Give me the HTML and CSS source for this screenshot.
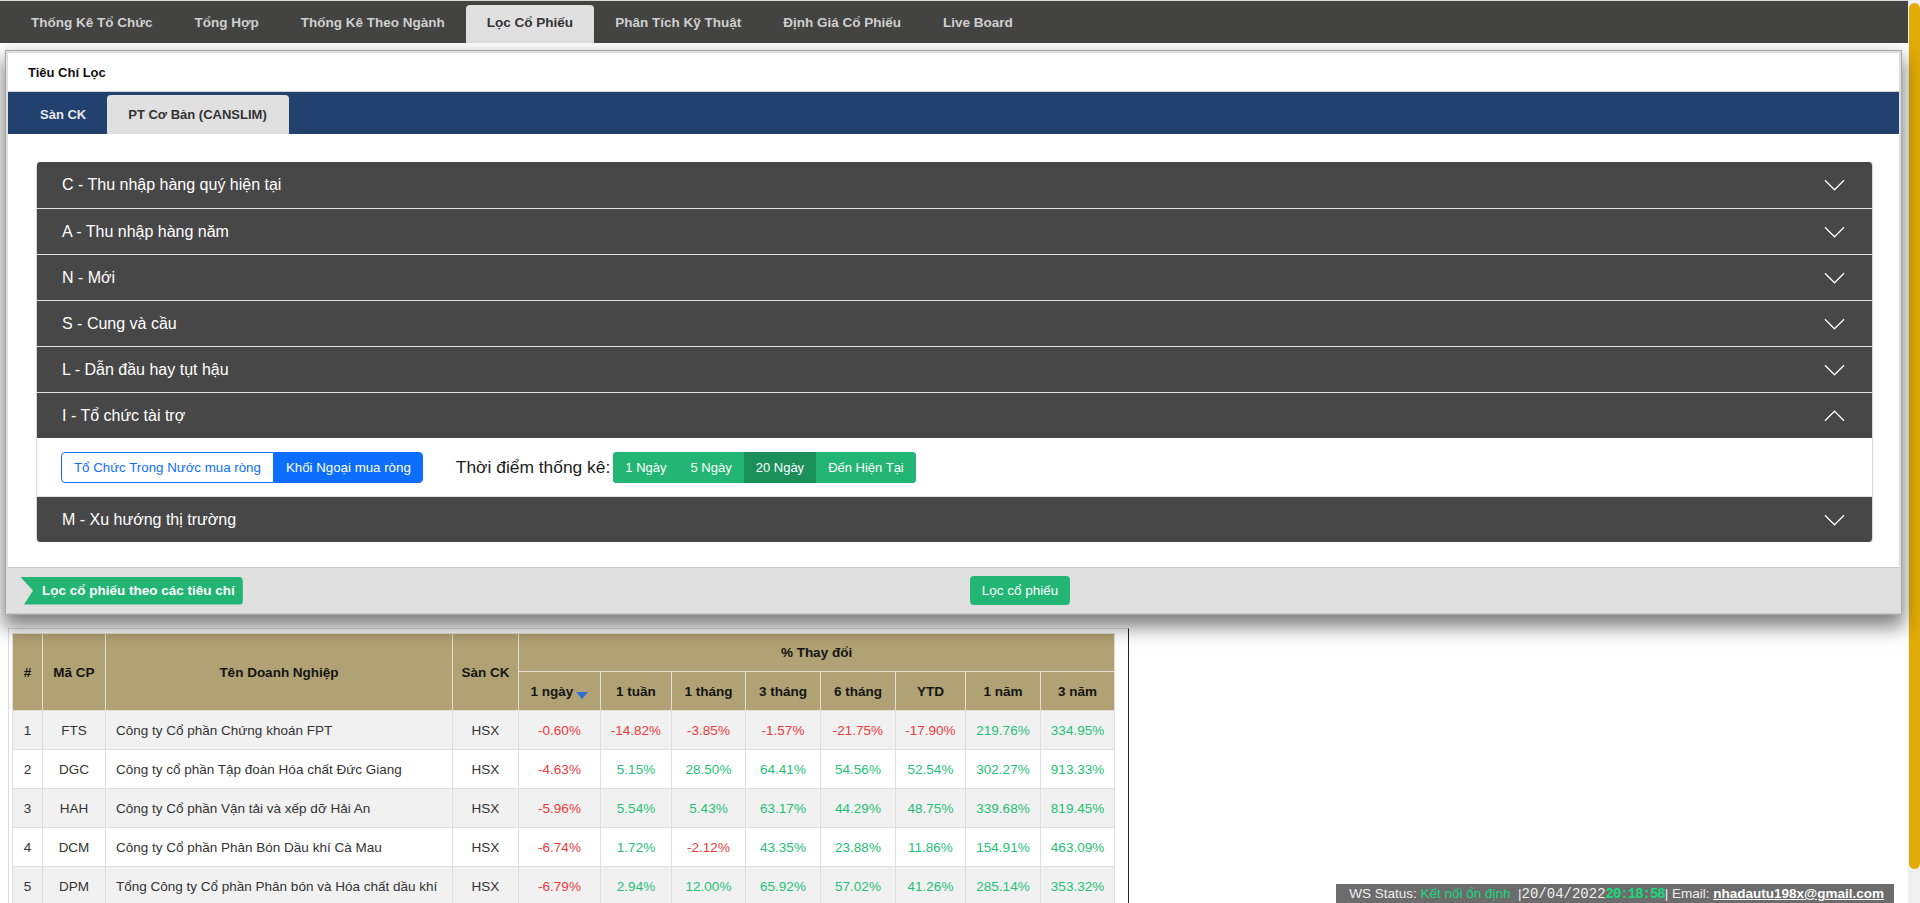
FILE: index.html
```html
<!DOCTYPE html>
<html lang="vi">
<head>
<meta charset="utf-8">
<title>Lọc Cổ Phiếu</title>
<link rel="stylesheet" href="styles.css">
</head>
<body>
<nav class="topnav">
  <a class="tab">Thống Kê Tổ Chức</a>
  <a class="tab">Tổng Hợp</a>
  <a class="tab">Thống Kê Theo Ngành</a>
  <a class="tab active">Lọc Cổ Phiếu</a>
  <a class="tab">Phân Tích Kỹ Thuật</a>
  <a class="tab">Định Giá Cổ Phiếu</a>
  <a class="tab">Live Board</a>
</nav>

<section class="panel">
  <div class="panel-inner">
    <div class="panel-title">Tiêu Chí Lọc</div>
    <div class="subtabs">
      <a class="subtab">Sàn CK</a>
      <a class="subtab active">PT Cơ Bản (CANSLIM)</a>
    </div>
    <div class="content">
      <div class="accordion">
        <div class="acc-head"><span>C - Thu nhập hàng quý hiện tại</span><svg class="chev" viewBox="0 0 22 12"><polyline points="1,1 11,11 21,1"/></svg></div>
        <div class="acc-head"><span>A - Thu nhập hàng năm</span><svg class="chev" viewBox="0 0 22 12"><polyline points="1,1 11,11 21,1"/></svg></div>
        <div class="acc-head"><span>N - Mới</span><svg class="chev" viewBox="0 0 22 12"><polyline points="1,1 11,11 21,1"/></svg></div>
        <div class="acc-head"><span>S - Cung và cầu</span><svg class="chev" viewBox="0 0 22 12"><polyline points="1,1 11,11 21,1"/></svg></div>
        <div class="acc-head"><span>L - Dẫn đầu hay tụt hậu</span><svg class="chev" viewBox="0 0 22 12"><polyline points="1,1 11,11 21,1"/></svg></div>
        <div class="acc-head"><span>I - Tổ chức tài trợ</span><svg class="chev" viewBox="0 0 22 12"><polyline points="1,11 11,1 21,11"/></svg></div>
        <div class="acc-body">
          <div class="btn-group">
            <button class="btn btn-outline">Tổ Chức Trong Nước mua ròng</button>
            <button class="btn btn-blue">Khối Ngoại mua ròng</button>
          </div>
          <span class="label">Thời điểm thống kê:</span>
          <div class="btn-group green-group">
            <button class="btn btn-green">1 Ngày</button>
            <button class="btn btn-green">5 Ngày</button>
            <button class="btn btn-green dark">20 Ngày</button>
            <button class="btn btn-green">Đến Hiện Tại</button>
          </div>
        </div>
        <div class="acc-head last"><span>M - Xu hướng thị trường</span><svg class="chev" viewBox="0 0 22 12"><polyline points="1,1 11,11 21,1"/></svg></div>
      </div>
    </div>
    <div class="footer">
      <div class="ribbon">Lọc cổ phiếu theo các tiêu chí</div>
      <button class="btn-filter">Lọc cổ phiếu</button>
    </div>
  </div>
</section>

<section class="table-wrap">
  <table class="grid">
    <colgroup>
      <col style="width:30px"><col style="width:63px"><col style="width:347px"><col style="width:66px">
      <col style="width:82px"><col style="width:71px"><col style="width:74px"><col style="width:75px">
      <col style="width:75px"><col style="width:70px"><col style="width:75px"><col style="width:74px">
    </colgroup>
    <thead>
      <tr class="h1">
        <th rowspan="2">#</th>
        <th rowspan="2">Mã CP</th>
        <th rowspan="2">Tên Doanh Nghiệp</th>
        <th rowspan="2">Sàn CK</th>
        <th colspan="8">% Thay đổi</th>
      </tr>
      <tr class="h2">
        <th>1 ngày<span class="sort"></span></th>
        <th>1 tuần</th>
        <th>1 tháng</th>
        <th>3 tháng</th>
        <th>6 tháng</th>
        <th>YTD</th>
        <th>1 năm</th>
        <th>3 năm</th>
      </tr>
    </thead>
    <tbody>
      <tr>
        <td>1</td><td>FTS</td><td class="name">Công ty Cổ phần Chứng khoán FPT</td><td>HSX</td>
        <td class="dn">-0.60%</td><td class="dn">-14.82%</td><td class="dn">-3.85%</td><td class="dn">-1.57%</td><td class="dn">-21.75%</td><td class="dn">-17.90%</td><td class="up">219.76%</td><td class="up">334.95%</td>
      </tr>
      <tr>
        <td>2</td><td>DGC</td><td class="name">Công ty cổ phần Tập đoàn Hóa chất Đức Giang</td><td>HSX</td>
        <td class="dn">-4.63%</td><td class="up">5.15%</td><td class="up">28.50%</td><td class="up">64.41%</td><td class="up">54.56%</td><td class="up">52.54%</td><td class="up">302.27%</td><td class="up">913.33%</td>
      </tr>
      <tr>
        <td>3</td><td>HAH</td><td class="name">Công ty Cổ phần Vận tải và xếp dỡ Hải An</td><td>HSX</td>
        <td class="dn">-5.96%</td><td class="up">5.54%</td><td class="up">5.43%</td><td class="up">63.17%</td><td class="up">44.29%</td><td class="up">48.75%</td><td class="up">339.68%</td><td class="up">819.45%</td>
      </tr>
      <tr>
        <td>4</td><td>DCM</td><td class="name">Công ty Cổ phần Phân Bón Dầu khí Cà Mau</td><td>HSX</td>
        <td class="dn">-6.74%</td><td class="up">1.72%</td><td class="dn">-2.12%</td><td class="up">43.35%</td><td class="up">23.88%</td><td class="up">11.86%</td><td class="up">154.91%</td><td class="up">463.09%</td>
      </tr>
      <tr>
        <td>5</td><td>DPM</td><td class="name">Tổng Công ty Cổ phần Phân bón và Hóa chất dầu khí</td><td>HSX</td>
        <td class="dn">-6.79%</td><td class="up">2.94%</td><td class="up">12.00%</td><td class="up">65.92%</td><td class="up">57.02%</td><td class="up">41.26%</td><td class="up">285.14%</td><td class="up">353.32%</td>
      </tr>
    </tbody>
  </table>
</section>

<div class="status">WS Status: <span class="ok">Kết nối ổn định</span>  |<span class="digit">20/04/2022</span> <span class="digit time">20:18:58</span>| Email: <a class="mail">nhadautu198x@gmail.com</a></div>

<div class="scrollbar" aria-hidden="true"><div class="thumb"></div></div>
</body>
</html>
```

FILE: styles.css
```css
* {
  box-sizing: border-box;
}
body {
  margin: 0;
  padding: 0 12px 5px 0;
  font-family: "Liberation Sans", Arial, sans-serif;
  color: #212529;
  background: #fff;
}

/* page scrollbar (drawn, headless hides native bars) */
.scrollbar {
  position: fixed;
  top: 0;
  right: 0;
  bottom: 0;
  width: 12px;
  background: #f0f0f0;
  padding: 3px 0 0 1px;
}
.thumb {
  height: 866px;
  background: #e2ac08;
  border-radius: 6px;
}

/* top navigation */
.topnav {
  display: flex;
  align-items: flex-end;
  height: 43px;
  padding-left: 10px;
  background: #434341;
  border-top: 1px solid #d8d8d8;
}
.tab {
  height: 38px;
  display: flex;
  align-items: center;
  padding: 0 21px 3px;
  font-size: 13.5px;
  font-weight: bold;
  color: #cfcfcf;
  border-radius: 4px 4px 0 0;
}
.tab.active {
  background: #e0e0e0;
  color: #333;
}

/* filter panel */
.panel {
  position: relative;
  z-index: 2;
  margin: 7px 6px 0 5px;
  border: 1px solid #a8a8a8;
  background: #dedede;
  padding: 2px 2px 0 2px;
  box-shadow: 0 10px 18px 2px rgba(0, 0, 0, 0.5);
}
.panel-inner {
  background: #fff;
}
.panel-title {
  height: 39px;
  display: flex;
  align-items: center;
  padding-left: 20px;
  font-size: 13px;
  font-weight: bold;
  color: #111;
  border-bottom: 1px solid #d4d4d4;
}
.subtabs {
  display: flex;
  align-items: flex-end;
  height: 42px;
  padding-left: 11px;
  background: #22416f;
}
.subtab {
  height: 39px;
  display: flex;
  align-items: center;
  padding: 0 21px;
  font-size: 13px;
  font-weight: bold;
  color: #e8e8e8;
  border-radius: 4px 4px 0 0;
}
.subtab.active {
  background: #e0e0e0;
  color: #333;
  padding: 0 22px 0 21px;
}
.content {
  padding: 28px 26px 25px 28px;
}

/* accordion */
.accordion {
  border-radius: 4px;
  overflow: hidden;
  border: 1px solid #d8d8d8;
  border-width: 0 1px;
}
.acc-head {
  height: 46px;
  display: flex;
  align-items: center;
  justify-content: space-between;
  padding: 0 27px 0 25px;
  background: #474747;
  color: #fff;
  font-size: 16px;
  border-top: 1px solid #e2e2e2;
}
.acc-head:first-child {
  border-top: 0;
}
.chev {
  width: 21px;
  height: 12px;
  fill: none;
  stroke: #fff;
  stroke-width: 1.3;
}
.acc-body {
  height: 58px;
  display: flex;
  align-items: center;
  padding-left: 24px;
  background: #fff;
}
.btn-group {
  display: flex;
  height: 31px;
}
.btn {
  font-family: "Liberation Sans", Arial, sans-serif;
  font-size: 13.3px;
  height: 31px;
  padding: 0 12px;
  border: 1px solid transparent;
  background: none;
  color: #fff;
}
.btn-outline {
  border-color: #0d6efd;
  color: #0d6efd;
  border-radius: 4px 0 0 4px;
  background: #fff;
}
.btn-blue {
  background: #0d6efd;
  border-color: #0d6efd;
  border-radius: 0 4px 4px 0;
  padding: 0 11px;
}
.label {
  margin-left: 33px;
  font-size: 17.4px;
  color: #1b1b1b;
}
.green-group {
  margin-left: 3px;
  background: #22b573;
  border-radius: 4px;
  overflow: hidden;
}
.btn-green {
  background: #22b573;
  font-size: 13px;
  padding: 0 11px;
}
.btn-green.dark {
  background: #1a8f5a;
}

/* footer */
.footer {
  display: flex;
  align-items: center;
  height: 47px;
  background: #e0e0e0;
  border-top: 1px solid #c9c9c9;
  border-bottom: 1px solid #c9c9c9;
  padding-left: 12px;
}
.ribbon {
  height: 28px;
  display: flex;
  align-items: center;
  padding: 0 8px 0 22px;
  background: #22b573;
  color: #fff;
  font-size: 13.5px;
  font-weight: bold;
  border-radius: 0 4px 4px 0;
  clip-path: polygon(0 0, 100% 0, 100% 100%, 4px 100%, 13px 50%);
}
.btn-filter {
  margin-left: 727px;
  height: 29px;
  padding: 0 12px;
  border: 0;
  border-radius: 4px;
  background: #22b573;
  color: #fff;
  font-family: "Liberation Sans", Arial, sans-serif;
  font-size: 13.5px;
}

/* table */
.table-wrap {
  margin: 13px 0 0 8px;
  width: 1121px;
  height: 310px;
  overflow: hidden;
  border: 1px solid #dcdcdc;
  border-right: 1px solid #222;
  border-bottom: 0;
  padding: 4px 0 0 3px;
}
.grid {
  border-collapse: collapse;
  table-layout: fixed;
  width: 1102px;
  font-size: 13.5px;
}
.grid th {
  background: #b0a274;
  color: #151515;
  font-weight: bold;
  border: 1px solid #e4dfd0;
  text-align: center;
  padding: 0;
}
.grid tr.h1 {
  height: 38px;
}
.grid tr.h2 {
  height: 39px;
}
.grid th .sort {
  display: inline-block;
  margin-left: 3px;
  vertical-align: -3px;
  border-left: 6px solid transparent;
  border-right: 6px solid transparent;
  border-top: 7px solid #2f6fd4;
}
.grid tbody tr {
  height: 39px;
}
.grid tbody tr:nth-child(odd) {
  background: #f1f1f1;
}
.grid td {
  border: 1px solid #dedede;
  text-align: center;
  color: #333;
  padding: 0;
}
.grid td.name {
  text-align: left;
  padding-left: 10px;
}
.grid td.dn {
  color: #ec3a3a;
}
.grid td.up {
  color: #1fbf78;
}

/* status bar */
.status {
  position: fixed;
  right: 26px;
  bottom: 0;
  height: 19px;
  display: flex;
  align-items: center;
  padding: 0 10px 0 13px;
  background: #6c6c6c;
  color: #eee;
  font-size: 13.5px;
  white-space: pre;
}
.status .ok {
  color: #19d97d;
}
.status .digit {
  font-family: "Liberation Mono", monospace;
  font-size: 14px;
  color: #f0f0f0;
}
.status .time {
  color: #19d97d;
  font-weight: bold;
  letter-spacing: -1px;
}
.status .mail {
  color: #fff;
  font-weight: bold;
  text-decoration: underline;
}
```
